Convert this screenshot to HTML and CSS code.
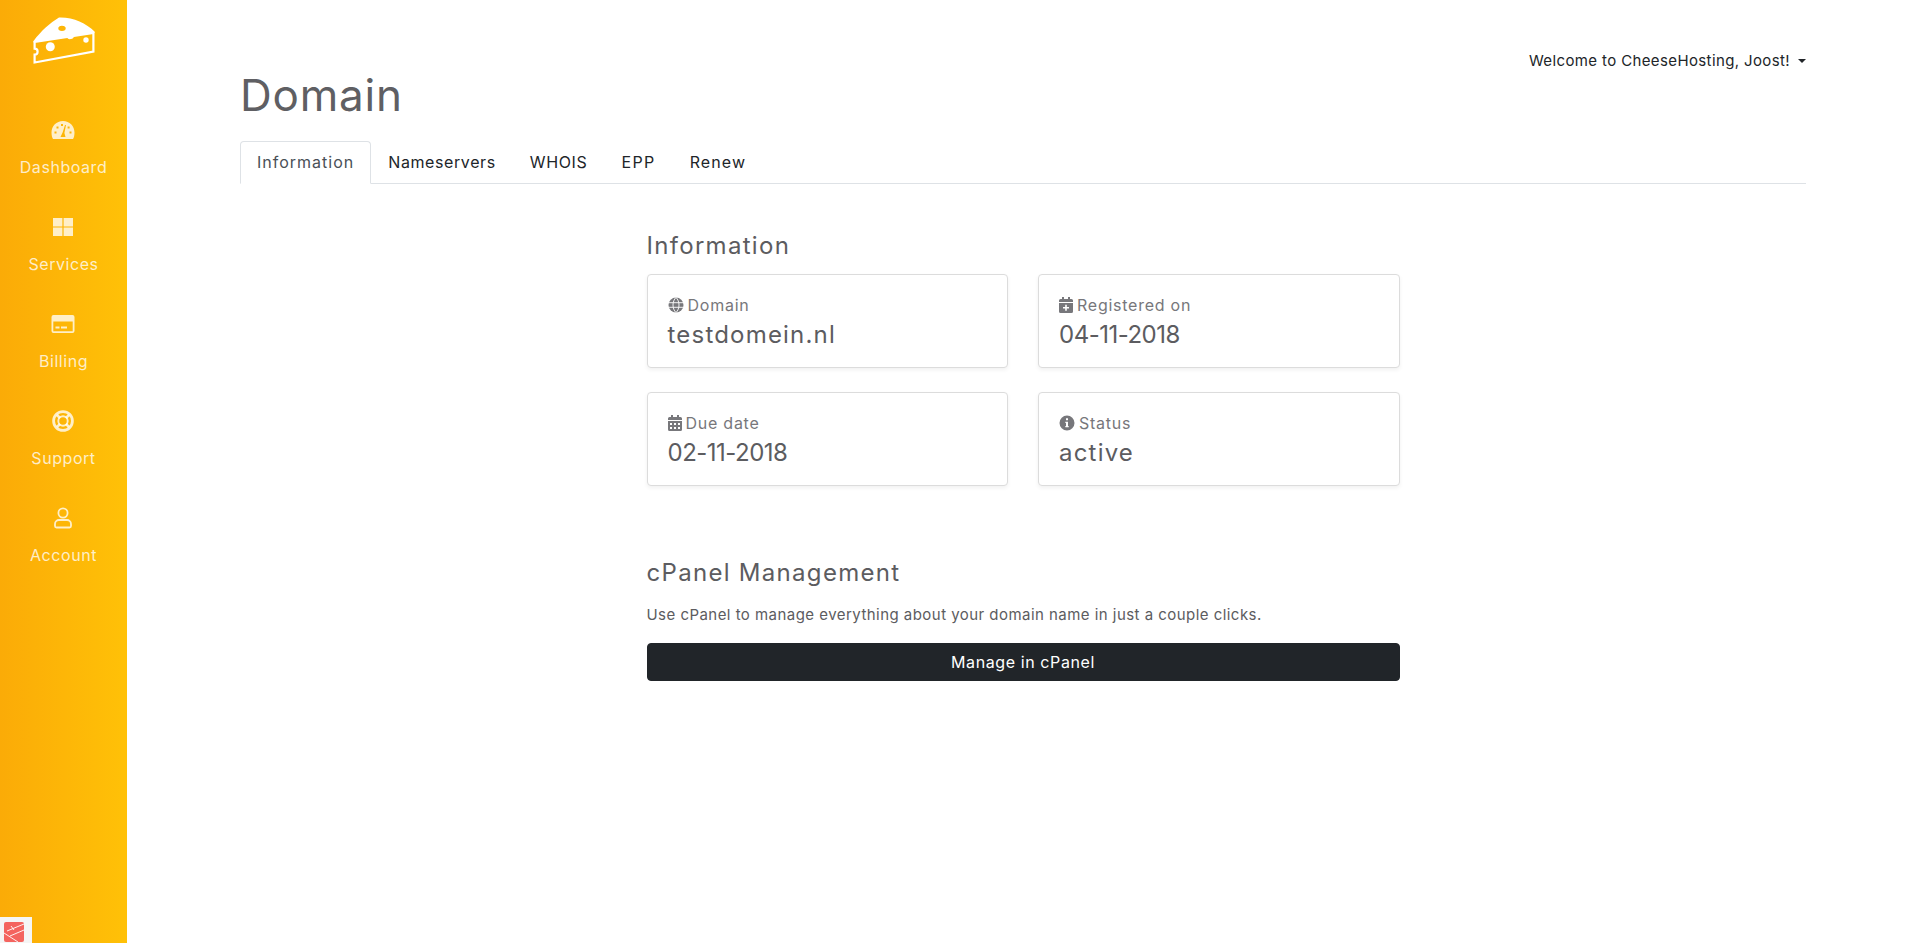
FILE: index.html
```html
<!DOCTYPE html>
<html lang="en">
<head>
<meta charset="utf-8">
<title>Domain</title>
<link rel="stylesheet" href="styles.css">
</head>
<body>
<aside class="sidebar">
  <svg class="logo" viewBox="30 15 66 51" width="66" height="51">
    <path fill="#fff" fill-rule="evenodd" d="M32.500 41 C40 31 49 23 58 17.500 C72 17 85 23 93.500 31.500 L93.500 33 L32.500 42.500 Z M57.300 28.300 a3.700 2.600 0 1 0 7.400 0 a3.700 2.600 0 1 0 -7.400 0 Z"/>
    <path fill="none" stroke="#fff" stroke-width="2.200" d="M33.600 42 L92.400 33 V51.500 L33.600 62.500 V54.700 A3 3 0 0 0 33.600 48.700 Z"/>
    <circle cx="49.300" cy="46.700" r="4.500" fill="#fff"/>
    <circle cx="85" cy="40" r="2.700" fill="#fff"/>
    <path fill="#fff" d="M65.300 36 A4 4 0 0 0 73.200 35 Z"/>
  </svg>
  <nav class="side-nav">
    <a class="side-item">
      <svg class="side-icon" viewBox="0 0 24 20" width="24" height="20"><path fill="currentColor" fill-rule="evenodd" d="M12 1 C5.500 1 0.500 6 0.500 12.500 C0.500 15 1 17.500 2 19 L22 19 C23 17.500 23.500 15 23.500 12.500 C23.500 6 18.500 1 12 1 Z M9.500 17 L14.500 17 L13.400 13 L15 5 L14 5 L11.600 12.500 Z M10 4 h2 v2 h-2 Z M5.500 6.500 h2 v2 h-2 Z M3.500 11.500 h2 v2 h-2 Z M18.500 11.500 h2 v2 h-2 Z M16.600 6.500 h2 v2 h-2 Z"/></svg>
      <span>Dashboard</span>
    </a>
    <a class="side-item">
      <svg class="side-icon" viewBox="0 0 22 20" width="22" height="20"><path fill="currentColor" d="M1 1 h9.400 v8.400 H1 Z M11.600 1 H21 v8.400 h-9.400 Z M1 10.600 h9.400 V19 H1 Z M11.600 10.600 H21 V19 h-9.400 Z"/></svg>
      <span>Services</span>
    </a>
    <a class="side-item">
      <svg class="side-icon" viewBox="0 0 24 20" width="24" height="20"><path fill="currentColor" fill-rule="evenodd" d="M2.500 1 H21.500 A2 2 0 0 1 23.500 3 V17 A2 2 0 0 1 21.500 19 H2.500 A2 2 0 0 1 0.500 17 V3 A2 2 0 0 1 2.500 1 Z M2.300 7.500 V17.200 H21.700 V7.500 Z M4.500 12.500 h4 v2 h-4 Z M10 12.500 h6 v2 h-6 Z"/></svg>
      <span>Billing</span>
    </a>
    <a class="side-item">
      <svg class="side-icon" viewBox="0 0 22 22" width="22" height="22"><circle cx="11" cy="11" r="9.400" fill="none" stroke="currentColor" stroke-width="2.800"/><circle cx="11" cy="11" r="4.700" fill="none" stroke="currentColor" stroke-width="1.900"/><path stroke="currentColor" stroke-width="2.600" d="M5 5 L8 8 M17 5 L14 8 M5 17 L8 14 M17 17 L14 14"/></svg>
      <span>Support</span>
    </a>
    <a class="side-item">
      <svg class="side-icon" viewBox="0 0 20 22" width="20" height="22"><circle cx="10" cy="6" r="4.600" fill="none" stroke="currentColor" stroke-width="1.800"/><path fill="none" stroke="currentColor" stroke-width="1.800" d="M3.500 20.500 H16.500 A1.500 1.500 0 0 0 18 19 V17 C18 14.500 16 13 14 13 H6 C4 13 2 14.500 2 17 V19 A1.500 1.500 0 0 0 3.500 20.500 Z"/></svg>
      <span>Account</span>
    </a>
  </nav>
</aside>
<div class="debugbar">
  <svg viewBox="0 0 20 20" width="20" height="20"><rect width="20" height="20" rx="2" fill="#f4645f"/><path fill="none" stroke="#fff" stroke-width="0.900" d="M0 11 L14 20 M3 9 L20 2 M6 14 L20 8 M7 4 L10 8"/></svg>
</div>
<main class="main">
  <header class="top">
    <h1 class="title">Domain</h1>
    <div class="welcome"><span>Welcome to CheeseHosting, Joost!</span><i class="caret"></i></div>
  </header>
  <ul class="tabs">
    <li class="tab tab-info active">Information</li>
    <li class="tab tab-name">Nameservers</li>
    <li class="tab tab-whois">WHOIS</li>
    <li class="tab tab-epp">EPP</li>
    <li class="tab tab-renew">Renew</li>
  </ul>
  <section class="content">
    <h2 class="section-title">Information</h2>
    <div class="cards">
      <div class="card">
        <div class="card-label"><svg class="label-icon" viewBox="0 0 16 16" width="16" height="16"><circle cx="8" cy="8" r="7.500" fill="currentColor"/><path fill="none" stroke="#fff" stroke-width="0.900" d="M1 5.700 H15 M1 10.300 H15 M8 0.500 C4 4 4 12 8 15.500 C12 12 12 4 8 0.500 Z"/></svg><span>Domain</span></div>
        <div class="card-value">testdomein.nl</div>
      </div>
      <div class="card">
        <div class="card-label"><svg class="label-icon" viewBox="0 0 14 16" width="14" height="16"><path fill="currentColor" fill-rule="evenodd" d="M3 0 H5 V2 H9 V0 H11 V2 H12.500 A1.500 1.500 0 0 1 14 3.500 V5 H0 V3.500 A1.500 1.500 0 0 1 1.500 2 H3 Z M0 6 H14 V14.500 A1.500 1.500 0 0 1 12.500 16 H1.500 A1.500 1.500 0 0 1 0 14.500 Z M6.200 7.800 V10 H4 V11.600 H6.200 V13.800 H7.800 V11.600 H10 V10 H7.800 V7.800 Z"/></svg><span>Registered on</span></div>
        <div class="card-value date">04-11-2018</div>
      </div>
      <div class="card">
        <div class="card-label"><svg class="label-icon" viewBox="0 0 14 16" width="14" height="16"><path fill="currentColor" fill-rule="evenodd" d="M3 0 H5 V2 H9 V0 H11 V2 H12.500 A1.500 1.500 0 0 1 14 3.500 V5 H0 V3.500 A1.500 1.500 0 0 1 1.500 2 H3 Z M0 6 H14 V14.500 A1.500 1.500 0 0 1 12.500 16 H1.500 A1.500 1.500 0 0 1 0 14.500 Z M2 8 v2 h2 v-2 Z M6 8 v2 h2 v-2 Z M10 8 v2 h2 v-2 Z M2 12 v2 h2 v-2 Z M6 12 v2 h2 v-2 Z M10 12 v2 h2 v-2 Z"/></svg><span>Due date</span></div>
        <div class="card-value date">02-11-2018</div>
      </div>
      <div class="card">
        <div class="card-label"><svg class="label-icon" viewBox="0 0 16 16" width="16" height="16"><path fill="currentColor" fill-rule="evenodd" d="M8 0.500 A7.500 7.500 0 1 1 8 15.500 A7.500 7.500 0 1 1 8 0.500 Z M7 3.300 V5.300 H9 V3.300 Z M6.300 6.800 V8 H7 V11 H6.300 V12.300 H9.700 V11 H9 V6.800 Z"/></svg><span>Status</span></div>
        <div class="card-value">active</div>
      </div>
    </div>
    <h2 class="section-title cpanel-title">cPanel Management</h2>
    <p class="lead-text">Use cPanel to manage everything about your domain name in just a couple clicks.</p>
    <button class="btn">Manage in cPanel</button>
  </section>
</main>
</body>
</html>
```
FILE: styles.css
```css
* { box-sizing: border-box; }
html, body { margin: 0; height: 100%; }
body {
  display: flex;
  height: 943px;
  overflow: hidden;
  background: #fff;
  font-family: "Inter", "Open Sans", sans-serif;
  color: #212529;
}
.sidebar {
  position: relative;
  flex: 0 0 127px;
  background: linear-gradient(90deg, #fbab07, #ffc107);
  display: flex;
  flex-direction: column;
  align-items: center;
}
.logo { margin-top: 15px; flex: none; }
.side-nav { margin-top: 53px; display: flex; flex-direction: column; width: 100%; }
.side-item {
  height: 97px;
  display: flex;
  flex-direction: column;
  align-items: center;
  color: rgba(255,255,255,.78);
  font-size: 16px;
  line-height: 20px;
  letter-spacing: .55px;
}
.side-icon { height: 22px; margin: 0 2px 16px 0; flex: none; }
.debugbar {
  position: absolute;
  left: 0;
  bottom: 0;
  width: 32px;
  height: 26px;
  background: #f5f5f5;
  padding: 5px 0 0 4px;
  overflow: hidden;
}
.main { flex: 1; padding: 0 110px 0 113px; min-width: 0; }
.top { display: flex; justify-content: space-between; align-items: flex-start; height: 141px; }
.title {
  margin: 70px 0 0;
  font-size: 44px;
  font-weight: 400;
  line-height: 50px;
  letter-spacing: .8px;
  color: #5f5f63;
}
.welcome {
  margin-top: 51px;
  font-size: 15px;
  line-height: 20px;
  display: flex;
  align-items: center;
  letter-spacing: .38px;
}
.caret {
  margin-left: 8px;
  border-top: 4px solid #212529;
  border-left: 4px solid transparent;
  border-right: 4px solid transparent;
}
.tabs {
  list-style: none;
  margin: 0;
  padding: 0;
  display: flex;
  height: 43px;
  border-bottom: 1px solid #dee2e6;
}
.tab {
  height: 43px;
  padding: 0 16px;
  font-size: 16px;
  line-height: 41px;
  color: #212529;
  border: 1px solid transparent;
  border-top-left-radius: 4px;
  border-top-right-radius: 4px;
}
.tab-info { letter-spacing: 1px; }
.tab-name { letter-spacing: .6px; }
.tab-whois { letter-spacing: .64px; }
.tab-epp { letter-spacing: 1.4px; }
.tab-renew { letter-spacing: 1.1px; }
.tab.active { color: #495057; background: #fff; border-color: #dee2e6 #dee2e6 #fff; }
.content { width: 753px; margin: 0 auto; padding-top: 46px; }
.section-title {
  margin: 0;
  font-size: 24px;
  font-weight: 400;
  line-height: 32px;
  letter-spacing: 1.3px;
  color: #5c5c60;
}
.cards { margin-top: 12px; display: grid; grid-template-columns: 1fr 1fr; column-gap: 30px; row-gap: 24px; }
.card {
  height: 94px;
  padding: 19px 20px 0;
  background: #fff;
  border: 1px solid #dcdcdc;
  border-radius: 4px;
  box-shadow: 0 2px 4px rgba(0,0,0,.06);
}
.card-label { display: flex; align-items: center; gap: 4px; font-size: 16px; line-height: 22px; letter-spacing: .75px; color: #77777b; }
.label-icon { flex: none; }
.card-value { margin-top: 2px; font-size: 24px; line-height: 34px; letter-spacing: 1.2px; color: #5c5c60; }
.card-value.date { letter-spacing: -.5px; }
.cpanel-title { margin-top: 71px; }
.lead-text { margin: 16px 0 0; font-size: 15px; line-height: 20px; letter-spacing: .46px; color: #5c5c60; }
.btn {
  display: block;
  width: 100%;
  height: 38px;
  margin-top: 18px;
  border: 1px solid #212529;
  border-radius: 4px;
  background: #212529;
  color: #fff;
  font: inherit;
  font-size: 16px;
  letter-spacing: .6px;
}
```
